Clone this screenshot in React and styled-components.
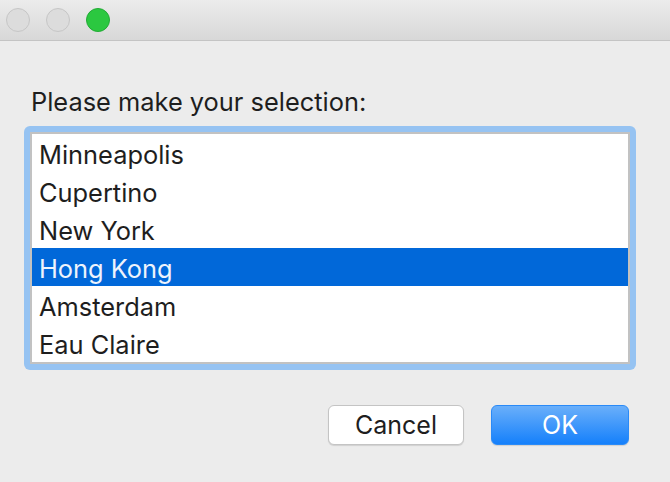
import React, { useState } from "react";
import styled, { createGlobalStyle } from "styled-components";

const cities = [
  "Minneapolis",
  "Cupertino",
  "New York",
  "Hong Kong",
  "Amsterdam",
  "Eau Claire",
];

const App = () => {
  const [selected, setSelected] = useState("Hong Kong");

  return (
    <Window>
      <GlobalStyle />
      <TitleBar>
        <Light />
        <Light />
        <Light $green />
      </TitleBar>
      <Content>
        <Label>Please make your selection:</Label>
        <FocusRing>
          <List>
            {cities.map((city) => (
              <Row
                key={city}
                $active={city === selected}
                onClick={() => setSelected(city)}
              >
                {city}
              </Row>
            ))}
          </List>
        </FocusRing>
        <Buttons>
          <Button>Cancel</Button>
          <Button $primary>OK</Button>
        </Buttons>
      </Content>
    </Window>
  );
};

const GlobalStyle = createGlobalStyle`
  html, body {
    margin: 0;
    padding: 0;
    background: #ececec;
  }
  body {
    font-family: Inter, "Liberation Sans", sans-serif;
  }
`;

const Window = styled.div`
  width: 670px;
  height: 482px;
  background: #ececec;
  display: flex;
  flex-direction: column;
`;

const TitleBar = styled.div`
  height: 40px;
  display: flex;
  align-items: center;
  gap: 16px;
  padding-left: 6px;
  background: linear-gradient(#ececec, #d8d8d8);
  border-bottom: 1px solid #c4c4c4;
`;

const Light = styled.div`
  width: 22px;
  height: 22px;
  border-radius: 50%;
  background: ${(p) => (p.$green ? "#2bc840" : "#dcdcdc")};
  border: 1px solid ${(p) => (p.$green ? "#22ab35" : "#c6c6c6")};
`;

const Content = styled.div`
  display: flex;
  flex-direction: column;
  padding: 0 34px 0 24px;
`;

const Label = styled.div`
  margin: 46px 0 0 7px;
  font-size: 25.4px;
  line-height: 30px;
  color: #1e1e1e;
`;

const FocusRing = styled.div`
  margin-top: 9px;
  padding: 6px;
  background: #96c3f2;
  border-radius: 6px;
`;

const List = styled.div`
  background: #fff;
  border: 2px solid #c2c2c2;
`;

const Row = styled.div`
  height: 38px;
  display: flex;
  align-items: center;
  padding: 2px 0 0 7px;
  box-sizing: border-box;
  font-size: 25.4px;
  color: ${(p) => (p.$active ? "#eef3fc" : "#1e1e1e")};
  background: ${(p) => (p.$active ? "#0168d9" : "transparent")};
`;

const Buttons = styled.div`
  display: flex;
  justify-content: flex-end;
  gap: 27px;
  margin-top: 35px;
  padding-right: 7px;
`;

const Button = styled.button`
  width: ${(p) => (p.$primary ? "138px" : "136px")};
  height: 40px;
  border-radius: 6px;
  font-family: Inter, "Liberation Sans", sans-serif;
  font-size: 25px;
  padding: 0;
  color: ${(p) => (p.$primary ? "#fff" : "#1e1e1e")};
  background: ${(p) =>
    p.$primary ? "linear-gradient(#6aaffa, #1580fb)" : "#fff"};
  border: 1px solid ${(p) => (p.$primary ? "#2a8af7" : "#c4c4c4")};
  box-shadow: 0 1px 1px rgba(0, 0, 0, 0.12);
`;

export default App;
